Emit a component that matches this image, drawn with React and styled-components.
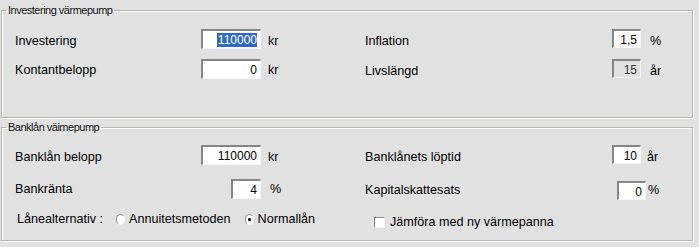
import React from "react";
import styled, { createGlobalStyle } from "styled-components";

const GlobalStyle = createGlobalStyle`
  html, body {
    margin: 0;
    background: #e1e1e1;
  }
  body {
    font-family: "Liberation Sans", Arial, sans-serif;
    color: #000;
  }
`;

const Page = styled.div`
  width: 699px;
  height: 247px;
  overflow: hidden;
  box-sizing: border-box;
  padding: 4px 6px 0 1px;
  display: flex;
  flex-direction: column;
  gap: 3px;
`;

const Group = styled.fieldset`
  box-sizing: border-box;
  height: ${(p) => p.$h}px;
  margin: 0;
  padding: 0;
  min-width: 0;
  border: 1px solid #b6b6ae;
  box-shadow: inset 1px 1px 0 #fff, 1px 1px 0 #fff;
`;

const Legend = styled.legend`
  margin-left: 4px;
  padding: 0 2px;
  font-size: 11px;
  line-height: 13px;
  letter-spacing: -0.5px;
  color: #111;
`;

const Body = styled.div`
  display: grid;
  grid-template-columns: 300px 305px;
  column-gap: 50px;
  padding: ${(p) => p.$top}px 0 0 13px;
`;

const Column = styled.div`
  display: flex;
  flex-direction: column;
`;

const Row = styled.div`
  display: flex;
  align-items: flex-start;
  height: 20px;
  margin-top: ${(p) => p.$gap || 0}px;
  font-size: 12.6px;
  white-space: nowrap;
`;

const Label = styled.div`
  flex: 1;
  padding-top: ${(p) => p.$drop}px;
  line-height: 15px;
`;

const Box = styled.div`
  box-sizing: border-box;
  width: ${(p) => p.$w}px;
  height: ${(p) => p.$h}px;
  background: ${(p) => (p.$disabled ? "#e1e1e1" : "#fff")};
  color: ${(p) => (p.$disabled ? "#333" : "#000")};
  border-style: solid;
  border-width: 2px 1px 1px 2px;
  border-color: #868686 #f6f6f4 #f6f6f4 #868686;
  font-size: 12px;
  text-align: right;
  padding: 2px 3px 0 0;
  line-height: 14px;
`;

const Selected = styled.span`
  background: #316ac5;
  color: #fff;
  padding: 0 0 0 1px;
`;

const Unit = styled.div`
  width: ${(p) => p.$w}px;
  box-sizing: border-box;
  padding-left: ${(p) => p.$pad}px;
  padding-top: ${(p) => p.$drop}px;
  line-height: 15px;
`;

const OptionRow = styled.div`
  display: flex;
  align-items: center;
  height: 16px;
  margin-top: ${(p) => p.$gap}px;
  padding-left: ${(p) => p.$indent}px;
  font-size: 12.6px;
  white-space: nowrap;
`;

const Radio = styled.span`
  box-sizing: border-box;
  width: 11px;
  height: 11px;
  border-radius: 50%;
  background: #fff;
  border: 1px solid;
  border-color: #8a8a8a #f4f4f4 #f4f4f4 #8a8a8a;
  margin: 0 4px 0 ${(p) => p.$left}px;
  display: flex;
  align-items: center;
  justify-content: center;
  &::after {
    content: "";
    width: 3px;
    height: 3px;
    border-radius: 50%;
    background: ${(p) => (p.$checked ? "#000" : "transparent")};
  }
`;

const Check = styled.span`
  box-sizing: border-box;
  width: 11px;
  height: 11px;
  background: #fff;
  border: 1px solid;
  border-color: #8a8a8a #f4f4f4 #f4f4f4 #8a8a8a;
  margin: 0 5px 0 9px;
`;

function Field({ label, value, unit, boxW, boxH = 20, unitW, unitPad = 7, drop = 5, gap, selected, disabled }) {
  return (
    <Row $gap={gap}>
      <Label $drop={drop}>{label}</Label>
      <Box $w={boxW} $h={boxH} $disabled={disabled}>
        {selected ? <Selected>{value}</Selected> : value}
      </Box>
      <Unit $w={unitW} $pad={unitPad} $drop={drop}>
        {unit}
      </Unit>
    </Row>
  );
}

export default function App() {
  return (
    <>
      <GlobalStyle />
      <Page>
        <Group $h={114}>
          <Legend>Investering värmepump</Legend>
          <Body $top={12}>
            <Column>
              <Field label="Investering" value="110000" unit="kr" boxW={60} unitW={54} selected />
              <Field label="Kontantbelopp" value="0" unit="kr" boxW={60} unitW={54} gap={10} drop={4} />
            </Column>
            <Column>
              <Field label="Inflation" value="1,5" unit="%" boxW={29} boxH={19} unitW={29} unitPad={9} />
              <Field label="Livslängd" value="15" unit="år" boxW={29} boxH={19} unitW={29} unitPad={9} gap={10} drop={5} disabled />
            </Column>
          </Body>
        </Group>
        <Group $h={120}>
          <Legend>Banklån väimepump</Legend>
          <Body $top={11}>
            <Column>
              <Field label="Banklån belopp" value="110000" unit="kr" boxW={60} unitW={54} />
              <Field label="Bankränta" value="4" unit="%" boxW={30} unitW={54} unitPad={9} gap={14} drop={3} />
              <OptionRow $gap={12} $indent={2}>
                Lånealternativ :
                <Radio $left={13} />
                Annuitetsmetoden
                <Radio $left={14} $checked />
                Normallån
              </OptionRow>
            </Column>
            <Column>
              <Field label="Banklånets löptid" value="10" unit="år" boxW={29} boxH={19} unitW={29} unitPad={6} />
              <Field label="Kapitalskattesats" value="0" unit="%" boxW={29} boxH={19} unitW={24} unitPad={2} gap={16} drop={2} />
              <OptionRow $gap={13} $indent={0}>
                <Check />
                Jämföra med ny värmepanna
              </OptionRow>
            </Column>
          </Body>
        </Group>
      </Page>
    </>
  );
}
